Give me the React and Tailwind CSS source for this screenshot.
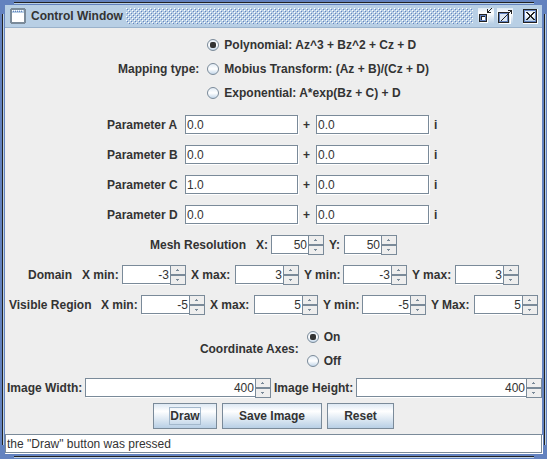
import React from "react";

const inputBase =
  "min-w-0 rounded-none border-[#7a8a99] bg-white text-[#333] outline-none shadow-[1px_1px_0_#fff]";

function TextField({ label, value }) {
  return (
    <input
      type="text"
      aria-label={label}
      defaultValue={value}
      className={`${inputBase} mb-px h-[19px] w-[113px] border pl-px`}
    />
  );
}

function SpinButton({ label, up }) {
  return (
    <button
      type="button"
      aria-label={label}
      className="flex h-[10px] w-4 items-center justify-center border border-[#7a8a99] bg-[#eee]"
    >
      <svg width="4" height="2" viewBox="0 0 4 2" shapeRendering="crispEdges" fill="#7a8a99">
        {up ? <path d="M1 0h1v1h1v1H0V1h1z" /> : <path d="M0 0h3v1H2v1H1V1H0z" />}
      </svg>
    </button>
  );
}

function Spinner({ id, label, value, width, labelWidth = "" }) {
  return (
    <>
      <label htmlFor={id} className={`shrink-0 whitespace-nowrap ${labelWidth}`}>
        {label}
      </label>
      <div className={`flex min-w-0 ${width}`}>
        <input
          id={id}
          type="text"
          inputMode="numeric"
          defaultValue={value}
          className={`${inputBase} h-[19px] flex-1 border-y border-l pr-px text-right`}
        />
        <div className="relative flex shrink-0 flex-col">
          <SpinButton up label={`Increase ${label}`} />
          <SpinButton label={`Decrease ${label}`} />
        </div>
      </div>
    </>
  );
}

function Radio({ name, label, checked }) {
  return (
    <label className="flex h-6 items-center gap-[5px]">
      <input
        type="radio"
        name={name}
        defaultChecked={checked}
        className="grid size-3 appearance-none place-items-center rounded-full border border-[#7a8a99] bg-linear-to-b from-[#dde8f3] via-white to-[#b8cfe5] bg-origin-border before:size-[6px] before:rounded-[2px] before:content-[''] checked:before:bg-[#333]"
      />
      {label}
    </label>
  );
}

function ParameterRow({ name, real, imaginary }) {
  return (
    <div className="flex h-[30px] items-center justify-center gap-[5px]">
      <span className="w-[73px]">Parameter {name}</span>
      <TextField label={`Parameter ${name} real part`} value={real} />
      <span className="w-2">+</span>
      <TextField label={`Parameter ${name} imaginary part`} value={imaginary} />
      <span className="w-[6px]">i</span>
    </div>
  );
}

function Row({ title, titleWidth, children }) {
  return (
    <div className="flex h-[30px] items-center justify-center gap-[5px]">
      <span className={`shrink-0 whitespace-nowrap ${titleWidth}`}>{title}</span>
      {children}
    </div>
  );
}

function PushButton({ children, width, focused }) {
  return (
    <button
      type="button"
      className={`flex h-[26px] items-center justify-center border border-[#7a8a99] bg-linear-to-b from-[#dde8f3] via-white via-30% to-[#b8cfe5] font-bold ${width}`}
    >
      <span className={focused ? "border border-[#a3b8cc] leading-4" : ""}>{children}</span>
    </button>
  );
}

function TitleBar() {
  return (
    <header className="flex h-[23px] items-center border-b border-[#9ab2cb] bg-[#b8cfe5] pl-[5px] pr-1">
      <svg width="16" height="16" viewBox="0 0 16 16" shapeRendering="crispEdges" className="shrink-0">
        <path fill="#7a8a99" d="M1 0h14v1h1v14h-1v1H1v-1H0V1h1z" />
        <path fill="#b8cfe5" d="M2 2h12v3H2z" />
        <path fill="#fff" d="M2 5h12v9H2zM2 2h1v1H2zM4 2h1v1H4zM6 2h1v1H6zM8 2h1v1H8zM10 2h1v1h-1zM12 2h1v1h-1z" />
        <path fill="#6382bf" d="M3 3h1v1H3zM5 3h1v1H5zM7 3h1v1H7zM9 3h1v1H9zM11 3h1v1h-1z" />
      </svg>
      <h1 className="ml-[5px] mr-[5px] w-[90px] whitespace-nowrap">Control Window</h1>
      <svg height="16" className="min-w-0 flex-1" shapeRendering="crispEdges" aria-hidden="true">
        <defs>
          <pattern id="bumps" width="4" height="4" patternUnits="userSpaceOnUse">
            <path fill="#fff" d="M0 0h1v1H0zM2 2h1v1H2z" />
            <path fill="#6382bf" d="M1 1h1v1H1zM3 3h1v1H3z" />
          </pattern>
        </defs>
        <rect width="100%" height="16" fill="url(#bumps)" />
      </svg>
      <div className="ml-[5px] flex shrink-0 gap-[3px]">
        <button type="button" aria-label="Minimize">
          <svg width="16" height="16" viewBox="0 0 16 16" shapeRendering="crispEdges">
            <defs>
              <linearGradient id="sheen" x2="0" y2="1">
                <stop offset="0" stopColor="#dde8f3" />
                <stop offset=".3" stopColor="#fff" />
                <stop offset="1" stopColor="#b8cfe5" />
              </linearGradient>
            </defs>
            <path fill="url(#sheen)" d="M0 0h16v16H0z" />
            <path fill="#fff" d="M2 14h7V7h1v8H2z" />
            <path fill="#222" d="M1 6h8v8H1z" />
            <path fill="#6382bf" d="M2 7h6v6H2z" />
            <path fill="#222" d="M3 8h4v4H3z" />
            <path fill="#fff" d="M4 9h3v3H4z" />
            <path fill="#222" d="M9 1h1v2h1V2h1V1h1V0h1v1h-1v1h-1v1h-1v1h2v1H9z" />
          </svg>
        </button>
        <button type="button" aria-label="Maximize">
          <svg width="16" height="16" viewBox="0 0 16 16" shapeRendering="crispEdges">
            <path fill="url(#sheen)" d="M0 0h16v16H0z" />
            <path fill="#222" d="M1 4h11v11H1z" />
            <path fill="#6382bf" d="M2 5h9v9H2z" />
            <path fill="#dde8f3" d="M3 6h7v7H3z" />
            <path fill="#222" d="M11 2h4v4h-1V4h-1v1h-1v1h-1v1h-1v1H9v1H8v1H7v1H6v1H5v1H4v-1h1v-1h1v-1h1V9h1V8h1V7h1V6h1V5h1V4h1V3h-2z" />
            <path fill="#fff" d="M2 15h11V6h1v10H2z" />
          </svg>
        </button>
        <button type="button" aria-label="Close" className="ml-[6px]">
          <svg width="16" height="16" viewBox="0 0 16 16" shapeRendering="crispEdges">
            <path fill="#fff" d="M1 1h15v15H1z" />
            <path fill="#222" d="M1 1h14v14H1z" />
            <path fill="#6382bf" d="M2 2h12v12H2z" />
            <path fill="url(#sheen)" d="M3 3h10v10H3z" />
            <path fill="#222" d="M4 4h2v1h1v1h1v1h1V6h1V5h1V4h2v1h-1v1h-1v1h-1v2h1v1h1v1h1v1h-2v-1h-1v-1H9V9H8v1H7v1H6v1H4v-1h1v-1h1V9h1V7H6V6H5V5H4z" />
          </svg>
        </button>
      </div>
    </header>
  );
}

export default function App() {
  return (
    <div className="relative border-[5px] border-[#6382bf] bg-[#eee] font-['Liberation_Sans',Arial,sans-serif] text-[12px] leading-[15px] text-[#333]">
      <div className="absolute -top-[3px] left-[9px] right-[8px] h-[2px] border-t border-[#222] bg-[#b8cfe5]" />
      <div className="absolute -bottom-[4px] left-[9px] right-[8px] h-[2px] border-t border-[#222] bg-[#b8cfe5]" />
      <div className="absolute -left-[3px] bottom-[9px] top-[9px] w-[2px] border-l border-[#222] bg-[#b8cfe5]" />
      <div className="absolute -right-[4px] bottom-[9px] top-[9px] w-[2px] border-l border-[#222] bg-[#b8cfe5]" />

      <div className="font-bold">
        <TitleBar />
      </div>

      <form className="font-bold" onSubmit={(e) => e.preventDefault()}>
        <fieldset className="flex items-center justify-center gap-2 py-[5px]">
          <span>Mapping type:</span>
          <div>
            <Radio name="mapping" label="Polynomial: Az^3 + Bz^2 + Cz + D" checked />
            <Radio name="mapping" label="Mobius Transform: (Az + B)/(Cz + D)" />
            <Radio name="mapping" label="Exponential: A*exp(Bz + C) + D" />
          </div>
        </fieldset>

        <div className="[&_input]:font-normal">
          <ParameterRow name="A" real="0.0" imaginary="0.0" />
          <ParameterRow name="B" real="0.0" imaginary="0.0" />
          <ParameterRow name="C" real="1.0" imaginary="0.0" />
          <ParameterRow name="D" real="0.0" imaginary="0.0" />

          <Row title="Mesh Resolution" titleWidth="w-[101px]">
            <Spinner id="mesh-x" label="X:" value="50" width="w-[53px]" labelWidth="w-[10px]" />
            <Spinner id="mesh-y" label="Y:" value="50" width="w-[53px]" labelWidth="w-[10px]" />
          </Row>
          <Row title="Domain" titleWidth="w-[49px]">
            <Spinner id="domain-x-min" label="X min:" value="-3" width="w-16" labelWidth="w-[35px]" />
            <Spinner id="domain-x-max" label="X max:" value="3" width="w-16" labelWidth="w-[39px]" />
            <Spinner id="domain-y-min" label="Y min:" value="-3" width="w-16" labelWidth="w-[34px]" />
            <Spinner id="domain-y-max" label="Y max:" value="3" width="w-16" labelWidth="w-[38px]" />
          </Row>
          <Row title="Visible Region" titleWidth="w-[87px]">
            <Spinner id="region-x-min" label="X min:" value="-5" width="w-16" labelWidth="w-[35px]" />
            <Spinner id="region-x-max" label="X max:" value="5" width="w-16" labelWidth="w-[39px]" />
            <Spinner id="region-y-min" label="Y min:" value="-5" width="w-16" labelWidth="w-[34px]" />
            <Spinner id="region-y-max" label="Y Max:" value="5" width="w-16" labelWidth="w-[38px]" />
          </Row>
        </div>

        <fieldset className="flex items-center justify-center gap-2 py-[5px] pr-[6px]">
          <span>Coordinate Axes:</span>
          <div>
            <Radio name="axes" label="On" checked />
            <Radio name="axes" label="Off" />
          </div>
        </fieldset>

        <div className="flex items-center gap-[3px] pl-[2px] [&_input]:font-normal">
          <Spinner id="image-width" label="Image Width:" value="400" width="flex-1" />
          <Spinner id="image-height" label="Image Height:" value="400" width="flex-1" />
        </div>

        <div className="flex justify-center gap-[5px] py-[5px]">
          <PushButton width="w-16" focused>Draw</PushButton>
          <PushButton width="w-[100px]">Save Image</PushButton>
          <PushButton width="w-[67px]">Reset</PushButton>
        </div>
      </form>

      <input
        type="text"
        aria-label="Status"
        readOnly
        value={'the "Draw" button was pressed'}
        className={`${inputBase} mb-px block h-[19px] w-full border pl-px`}
      />
    </div>
  );
}
